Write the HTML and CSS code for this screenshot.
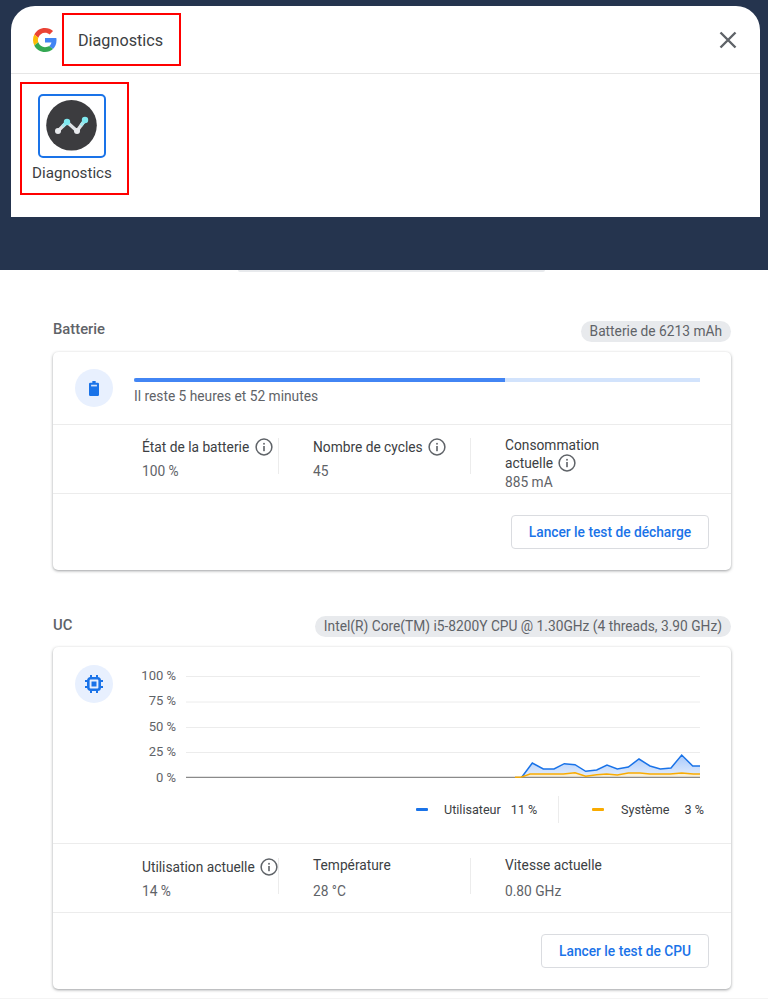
FILE: index.html
```html
<!DOCTYPE html>
<html lang="fr">
<head>
  <meta charset="UTF-8">
  <title>Diagnostics</title>
  <link rel="stylesheet" href="styles.css">
</head>
<body>
  <!-- lanceur -->
  <header class="launcher">
    <div class="panel">
      <div class="panel-head">
        <svg class="g-logo" viewBox="0 0 48 48" width="24" height="24">
          <path fill="#ea4335" d="M24 9.500c3.500 0 6.700 1.200 9.200 3.600l6.900-6.900C35.900 2.400 30.500 0 24 0 14.600 0 6.500 5.400 2.600 13.200l8 6.200C12.500 13.600 17.800 9.500 24 9.500z"/>
          <path fill="#4285f4" d="M47 24.500c0-1.600-.1-3.100-.4-4.500H24v9h12.900c-.6 3-2.200 5.500-4.700 7.200l7.700 6c4.500-4.200 7.100-10.300 7.100-17.700z"/>
          <path fill="#fbbc05" d="M10.600 28.600c-.5-1.400-.8-3-.8-4.600s.3-3.200.8-4.600l-8-6.200C.9 16.500 0 20.100 0 24s.9 7.500 2.600 10.800l8-6.200z"/>
          <path fill="#34a853" d="M24 48c6.500 0 11.900-2.100 15.900-5.800l-7.700-6c-2.200 1.400-4.900 2.300-8.200 2.300-6.200 0-11.500-4.100-13.400-9.900l-8 6.200C6.500 42.600 14.600 48 24 48z"/>
        </svg>
        <div class="title-box">Diagnostics</div>
        <svg class="close" viewBox="0 0 18 18" width="18" height="18">
          <path d="M1.500 1.500l15 15M16.500 1.500l-15 15" fill="none" stroke="#5f6368" stroke-width="2.400"/>
        </svg>
      </div>
      <div class="app-box">
        <div class="app-tile">
          <svg viewBox="0 0 64 60" width="64" height="60">
            <circle cx="31.500" cy="29.300" r="25.300" fill="#3c3c3f"/>
            <polyline points="18,35 27,26 37,35 45,24" fill="none" stroke="#dfe3e6" stroke-width="3.400"/>
            <path d="M27 26l-4.500 4.500M45 24l-4 5.500" fill="none" stroke="#a5e8ee" stroke-width="3.400"/>
            <circle cx="18" cy="35" r="3" fill="#e8eaed"/>
            <circle cx="27" cy="26" r="3.200" fill="#7fe9f0"/>
            <circle cx="37" cy="35" r="3" fill="#e8eaed"/>
            <circle cx="45" cy="24" r="3.200" fill="#7fe9f0"/>
          </svg>
        </div>
        <div class="app-name">Diagnostics</div>
      </div>
    </div>
  </header>
  <div class="peek"></div>

  <main class="page">
    <!-- batterie -->
    <section class="block battery">
      <div class="block-head">
        <h2>Batterie</h2>
        <span class="chip">Batterie de 6213 mAh</span>
      </div>
      <div class="card">
        <div class="card-top battery-top">
          <div class="round-icon">
            <svg viewBox="0 0 12 18" width="10" height="15">
              <path fill="#1a73e8" d="M4 0h4v2h2.500A1.500 1.500 0 0 1 12 3.500v13a1.500 1.500 0 0 1-1.500 1.500h-9A1.500 1.500 0 0 1 0 16.500v-13A1.500 1.500 0 0 1 1.500 2H4z"/>
              <rect x="2.500" y="4.500" width="7" height="2" fill="#d2e3fc"/>
            </svg>
          </div>
          <div class="charge">
            <div class="bar"><div class="bar-fill"></div></div>
            <div class="charge-text">Il reste 5 heures et 52 minutes</div>
          </div>
        </div>
        <div class="stats">
          <div class="stat">
            <div class="stat-label">État de la batterie <svg class="info"><use href="#info"/></svg></div>
            <div class="stat-value">100 %</div>
          </div>
          <div class="stat">
            <div class="stat-label">Nombre de cycles <svg class="info"><use href="#info"/></svg></div>
            <div class="stat-value">45</div>
          </div>
          <div class="stat stat-tall">
            <div class="stat-label">Consommation<br>actuelle <svg class="info"><use href="#info"/></svg></div>
            <div class="stat-value">885 mA</div>
          </div>
        </div>
        <div class="actions">
          <button class="btn btn-battery">Lancer le test de décharge</button>
        </div>
      </div>
    </section>

    <!-- processeur -->
    <section class="block cpu">
      <div class="block-head">
        <h2>UC</h2>
        <span class="chip">Intel(R) Core(TM) i5-8200Y CPU @ 1.30GHz (4 threads, 3.90 GHz)</span>
      </div>
      <div class="card">
        <div class="card-top cpu-top">
          <div class="round-icon">
            <svg viewBox="0 0 18 18" width="18" height="18">
              <rect x="3.300" y="3.300" width="11.400" height="11.400" rx="2.200" fill="none" stroke="#1a73e8" stroke-width="2.600"/>
              <rect x="6.500" y="6.500" width="5" height="5" fill="#1a73e8"/>
              <path d="M6 0v3M12 0v3M6 15v3M12 15v3M0 6h3M0 12h3M15 6h3M15 12h3" stroke="#1a73e8" stroke-width="2"/>
            </svg>
          </div>
          <div class="chart-wrap">
            <div class="chart">
              <div class="y-labels">
                <span>100 %</span><span>75 %</span><span>50 %</span><span>25 %</span><span>0 %</span>
              </div>
              <svg class="plot" viewBox="0 0 514 114" width="514" height="114">
                <defs>
                  <linearGradient id="userFill" x1="0" y1="0" x2="0" y2="1">
                    <stop offset="0" stop-color="#a9c9fa"/>
                    <stop offset="1" stop-color="#e4eefd"/>
                  </linearGradient>
                </defs>
                <path d="M0 6.500H514M0 32H514M0 57.500H514M0 82.500H514" stroke="#ececec" stroke-width="1"/>
                <path d="M329 107L335.700 107L346.300 93L357.300 99L368 99L378.300 93.700L389 94.700L399.700 101.300L410.700 100L421 95L431.300 99L442.300 97L453 89L464 96L474.300 99L485 98L495.700 85L506.700 96L514 96V107z" fill="url(#userFill)"/>
                <path d="M335.700 107L344 104L377.300 104L389 102.700L399.700 106.300L410.700 104.700L420.700 104L431.300 105L442.300 103L454 103L464 104L484 104L495.700 103L507.300 104L514 104V107z" fill="#faf0d8"/>
                <path d="M0 107.300H514" stroke="#8a8a8a" stroke-width="1.200"/>
                <polyline points="335.700,107.300 346.300,93 357.300,99 368,99 378.300,93.700 389,94.700 399.700,101.300 410.700,100 421,95 431.300,99 442.300,97 453,89 464,96 474.300,99 485,98 495.700,85 506.700,96 514,96" fill="none" stroke="#1a73e8" stroke-width="1.500"/>
                <polyline points="329,107.300 335.700,107 344,104 377.300,104 389,102.700 399.700,106.300 410.700,104.700 420.700,104 431.300,105 442.300,103 454,103 464,104 484,104 495.700,103 507.300,104 514,104" fill="none" stroke="#f9ab00" stroke-width="1.500"/>
              </svg>
            </div>
            <div class="legend">
              <div class="legend-item legend-user">
                <i class="dash dash-blue"></i>
                <span class="legend-name">Utilisateur</span>
                <span>11 %</span>
              </div>
              <div class="legend-item legend-sys">
                <i class="dash dash-orange"></i>
                <span class="legend-name">Système</span>
                <span>3 %</span>
              </div>
            </div>
          </div>
        </div>
        <div class="stats stats-cpu">
          <div class="stat">
            <div class="stat-label">Utilisation actuelle <svg class="info"><use href="#info"/></svg></div>
            <div class="stat-value">14 %</div>
          </div>
          <div class="stat stat-plain">
            <div class="stat-label">Température</div>
            <div class="stat-value">28 °C</div>
          </div>
          <div class="stat stat-plain">
            <div class="stat-label">Vitesse actuelle</div>
            <div class="stat-value">0.80 GHz</div>
          </div>
        </div>
        <div class="actions">
          <button class="btn btn-cpu">Lancer le test de CPU</button>
        </div>
      </div>
    </section>
    <div class="page-end"></div>
  </main>

  <svg class="defs" width="0" height="0">
    <symbol id="info" viewBox="0 0 18 18">
      <circle cx="9" cy="9" r="7.900" fill="none" stroke="#5f6368" stroke-width="1.500"/>
      <rect x="8.200" y="8" width="1.600" height="5.200" fill="#5f6368"/>
      <rect x="8.200" y="4.900" width="1.600" height="1.700" fill="#5f6368"/>
    </symbol>
  </svg>
</body>
</html>
```

FILE: styles.css
```css
body {
  margin: 0;
  background-color: #fff;
  color: #3c4043;
  font-family: Roboto, "Liberation Sans", sans-serif;
  font-size: 13.750px;
}
.launcher {
  background-color: #25344e;
  height: 270px;
  padding: 6px 8px 0 11px;
  box-sizing: border-box;
}
.panel {
  background-color: #fff;
  border-radius: 24px 24px 0 0;
  height: 211px;
}
.panel-head {
  display: flex;
  align-items: center;
  height: 67px;
  padding: 0 23px 0 22px;
  border-bottom: 1px solid #e6e6e6;
}
.g-logo {
  margin-right: 5px;
}
.title-box {
  display: flex;
  align-items: center;
  box-sizing: border-box;
  width: 119px;
  height: 53px;
  padding: 1px 0 0 14px;
  border: 2px solid #f00;
  font-size: 16.200px;
  color: #3c4043;
}
.close {
  margin-left: auto;
}
.app-box {
  box-sizing: border-box;
  width: 109px;
  height: 113px;
  margin: 8px 0 0 9px;
  padding: 10px 0 0 16px;
  border: 2px solid #f00;
}
.app-tile {
  box-sizing: border-box;
  width: 68px;
  height: 64px;
  border: 2px solid #1a73e8;
  border-radius: 5px;
}
.app-name {
  width: 68px;
  margin-top: 6px;
  font-size: 15.200px;
  color: #3c4043;
  white-space: nowrap;
  display: flex;
  justify-content: center;
}
.peek {
  height: 2px;
  width: 307px;
  margin-left: 238px;
  background-color: #e8eaed;
  border-radius: 0 0 6px 6px;
}
.page {
  padding: 0 37px 0 53px;
}
.block-head {
  display: flex;
  justify-content: space-between;
  align-items: center;
  height: 21px;
  margin-bottom: 10px;
}
.battery {
  padding-top: 49px;
}
.cpu {
  margin-top: 46px;
}
h2 {
  margin: 0 0 5px;
  font-size: 14.800px;
  font-weight: 500;
  color: #5f6368;
}
.cpu h2 {
  margin-bottom: 3px;
}
.chip {
  padding: 0 9px;
  line-height: 21px;
  border-radius: 11px;
  background-color: #e8eaed;
  color: #5f6368;
}
.card {
  border-radius: 5px;
  box-shadow: 0 1px 3px rgba(60,64,67,0.5);
}
.card-top {
  display: flex;
  border-bottom: 1px solid #ececec;
  box-sizing: border-box;
}
.battery-top {
  height: 73px;
  padding: 17px 31px 0 22px;
}
.cpu-top {
  height: 197px;
  padding: 18px 30px 0 22px;
}
.round-icon {
  flex: none;
  display: flex;
  align-items: center;
  justify-content: center;
  width: 38px;
  height: 38px;
  border-radius: 50%;
  background-color: #e8f0fe;
}
.charge {
  flex: 1;
  margin-left: 21px;
  padding-top: 9px;
}
.bar {
  height: 4px;
  background-color: #d2e3fc;
}
.bar-fill {
  width: 65.500%;
  height: 4px;
  background-color: #4285f4;
  border-radius: 2px 0 0 2px;
}
.charge-text {
  margin-top: 6px;
  color: #5f6368;
}
.chart-wrap {
  flex: 1;
  margin-top: 5px;
}
.chart {
  display: flex;
  height: 114px;
}
.y-labels {
  display: flex;
  flex-direction: column;
  width: 63px;
  margin: -7px 10px 0 0;
  text-align: right;
  color: #5f6368;
  font-size: 13px;
  line-height: 25.400px;
}
.plot {
  display: block;
}
.legend {
  display: flex;
  height: 27px;
  margin-top: 12px;
  color: #3c4043;
  font-size: 12.600px;
  white-space: nowrap;
}
.legend-item {
  display: flex;
  align-items: center;
}
.legend-user {
  box-sizing: border-box;
  width: 143px;
  margin-left: 303px;
  border-right: 1px solid #ececec;
}
.legend-sys {
  padding-left: 33px;
}
.dash {
  flex: none;
  width: 12px;
  height: 2.500px;
  border-radius: 1px;
  margin-right: 16px;
}
.dash-blue {
  background-color: #1a73e8;
}
.dash-orange {
  background-color: #f9ab00;
  margin-right: 17px;
}
.legend-name {
  margin-right: 10px;
}
.legend-sys .legend-name {
  margin-right: 15px;
}
.stats {
  display: grid;
  grid-template-columns: 137px 192px 1fr;
  height: 69px;
  box-sizing: border-box;
  padding: 13px 0 0 89px;
  border-bottom: 1px solid #ececec;
}
.stats-cpu {
  padding-top: 14px;
}
.stat {
  height: 36px;
  padding-left: 34px;
  border-right: 1px solid #ececec;
}
.stat:first-child {
  padding-left: 0;
}
.stat:last-child {
  border-right: none;
}
.stat-label {
  color: #3c4043;
  line-height: 18px;
  white-space: nowrap;
}
.stat-value {
  margin-top: 7px;
  color: #5f6368;
  line-height: 16px;
}
.stat-plain .stat-label {
  margin-top: -2px;
}
.stat-plain .stat-value {
  margin-top: 9px;
}
.stat-tall .stat-label {
  margin-top: -2px;
}
.stat-tall .stat-value {
  margin-top: 2px;
}
.info {
  width: 18px;
  height: 18px;
  margin-left: 2px;
  vertical-align: -4px;
}
.actions {
  display: flex;
  justify-content: flex-end;
  padding: 21px 22px;
}
.btn {
  height: 34px;
  padding: 0;
  background-color: #fff;
  border: 1px solid #dadce0;
  border-radius: 4px;
  color: #1a73e8;
  font-family: Roboto, "Liberation Sans", sans-serif;
  font-size: 13.750px;
  font-weight: 500;
}
.btn-battery {
  width: 198px;
}
.btn-cpu {
  width: 168px;
}
.page-end {
  height: 1px;
  margin: 9px -37px 0 -53px;
  background-color: #f4f4f4;
}
.defs {
  position: absolute;
}
```
